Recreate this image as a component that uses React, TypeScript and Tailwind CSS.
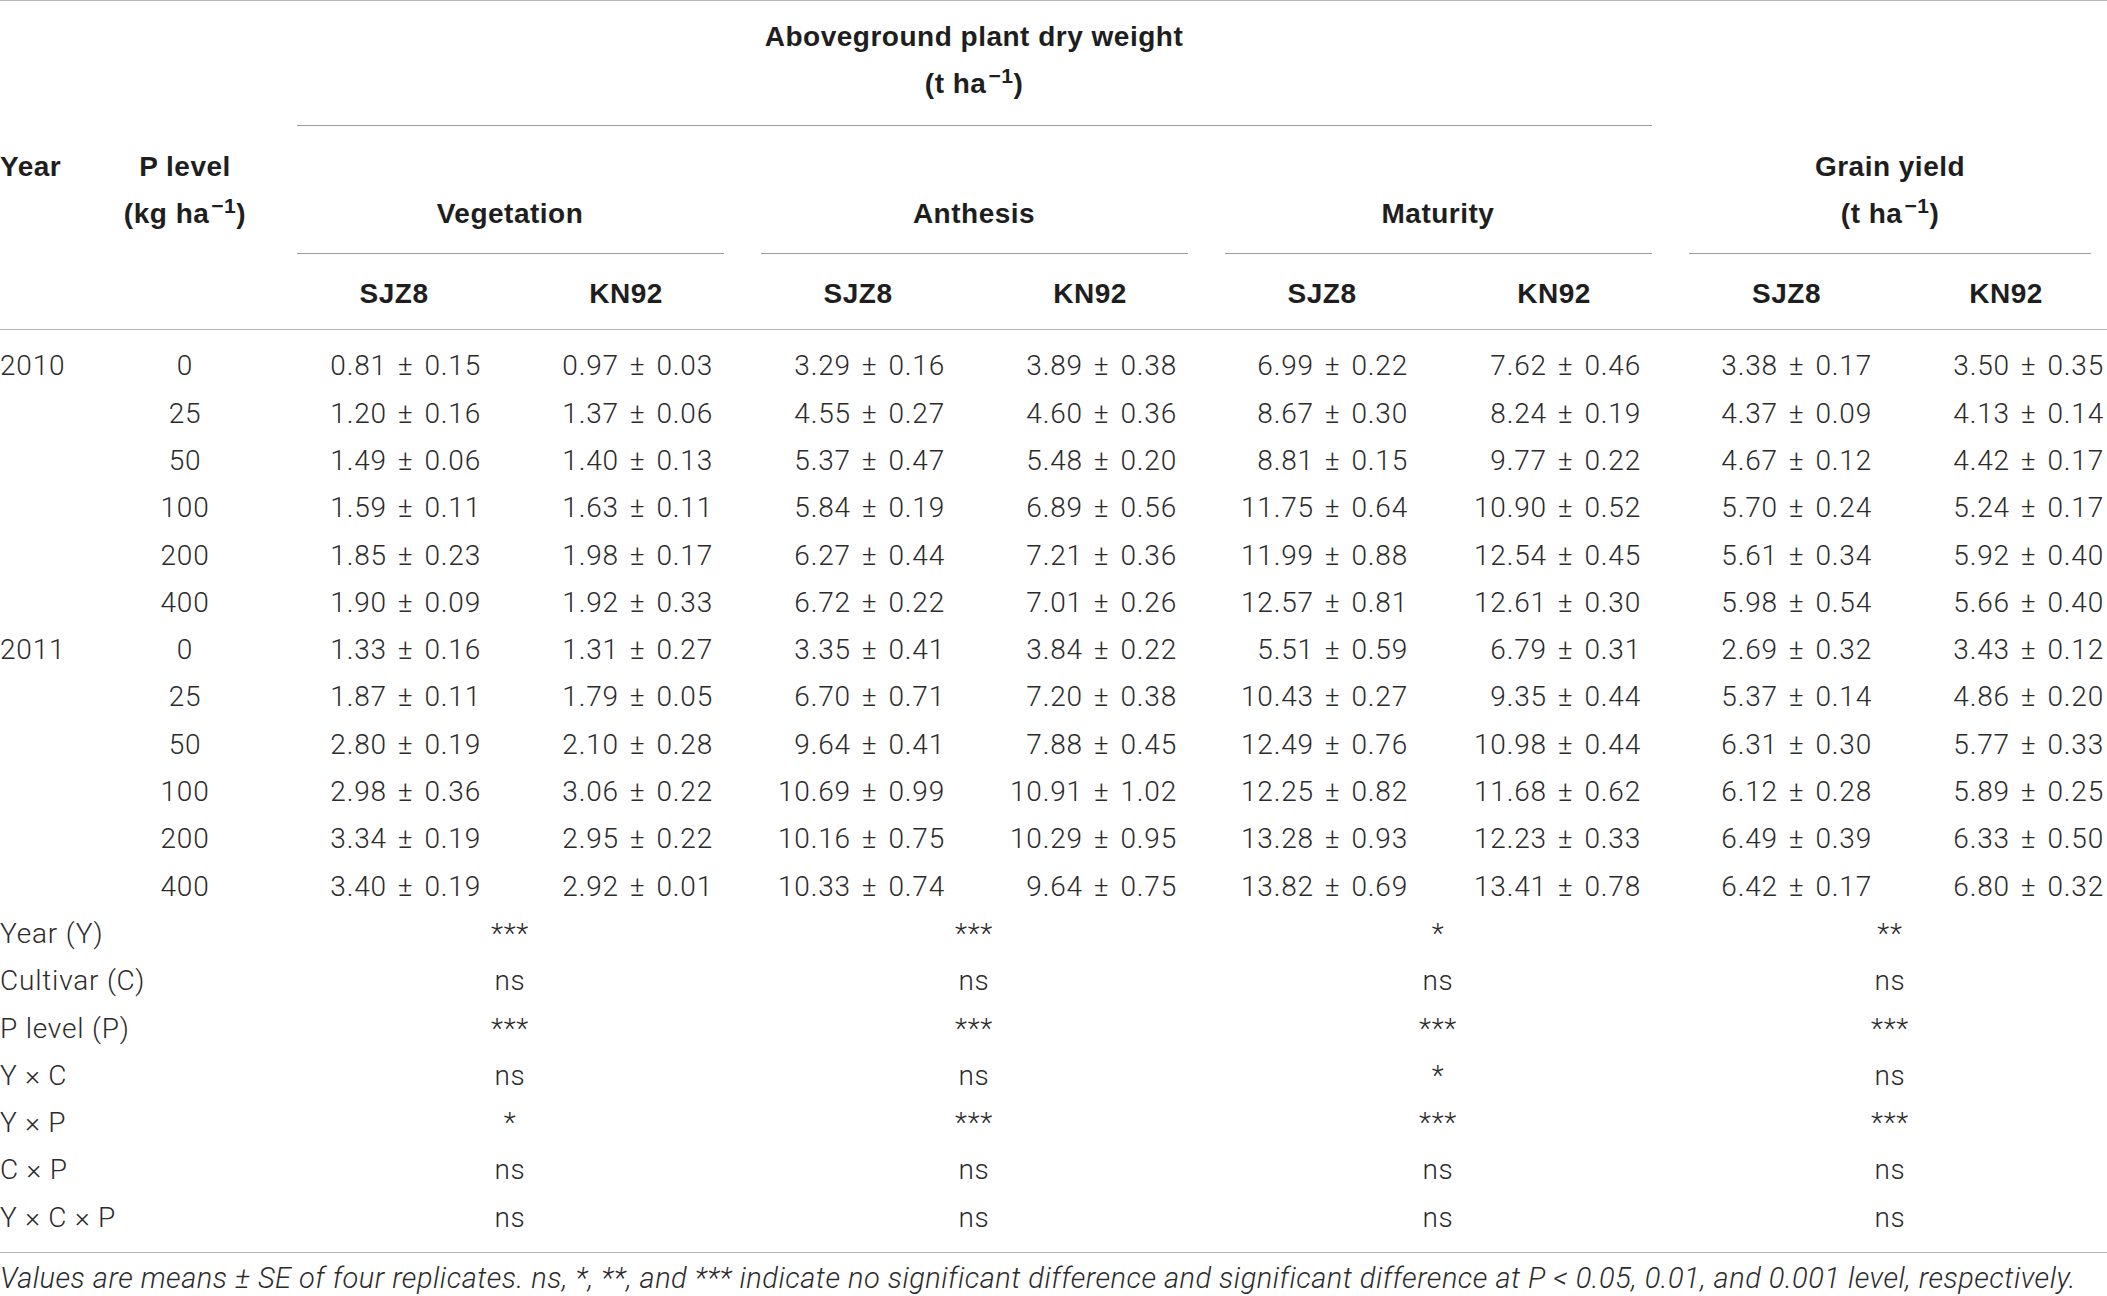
import React from "react";

const cols = "grid grid-cols-[92px_186px_232px_232px_232px_232px_232px_232px_220px_220px]";

const rows: { year: string; p: string; v: string[] }[] = [
  { year: "2010", p: "0", v: ["0.81 ± 0.15", "0.97 ± 0.03", "3.29 ± 0.16", "3.89 ± 0.38", "6.99 ± 0.22", "7.62 ± 0.46", "3.38 ± 0.17", "3.50 ± 0.35"] },
  { year: "", p: "25", v: ["1.20 ± 0.16", "1.37 ± 0.06", "4.55 ± 0.27", "4.60 ± 0.36", "8.67 ± 0.30", "8.24 ± 0.19", "4.37 ± 0.09", "4.13 ± 0.14"] },
  { year: "", p: "50", v: ["1.49 ± 0.06", "1.40 ± 0.13", "5.37 ± 0.47", "5.48 ± 0.20", "8.81 ± 0.15", "9.77 ± 0.22", "4.67 ± 0.12", "4.42 ± 0.17"] },
  { year: "", p: "100", v: ["1.59 ± 0.11", "1.63 ± 0.11", "5.84 ± 0.19", "6.89 ± 0.56", "11.75 ± 0.64", "10.90 ± 0.52", "5.70 ± 0.24", "5.24 ± 0.17"] },
  { year: "", p: "200", v: ["1.85 ± 0.23", "1.98 ± 0.17", "6.27 ± 0.44", "7.21 ± 0.36", "11.99 ± 0.88", "12.54 ± 0.45", "5.61 ± 0.34", "5.92 ± 0.40"] },
  { year: "", p: "400", v: ["1.90 ± 0.09", "1.92 ± 0.33", "6.72 ± 0.22", "7.01 ± 0.26", "12.57 ± 0.81", "12.61 ± 0.30", "5.98 ± 0.54", "5.66 ± 0.40"] },
  { year: "2011", p: "0", v: ["1.33 ± 0.16", "1.31 ± 0.27", "3.35 ± 0.41", "3.84 ± 0.22", "5.51 ± 0.59", "6.79 ± 0.31", "2.69 ± 0.32", "3.43 ± 0.12"] },
  { year: "", p: "25", v: ["1.87 ± 0.11", "1.79 ± 0.05", "6.70 ± 0.71", "7.20 ± 0.38", "10.43 ± 0.27", "9.35 ± 0.44", "5.37 ± 0.14", "4.86 ± 0.20"] },
  { year: "", p: "50", v: ["2.80 ± 0.19", "2.10 ± 0.28", "9.64 ± 0.41", "7.88 ± 0.45", "12.49 ± 0.76", "10.98 ± 0.44", "6.31 ± 0.30", "5.77 ± 0.33"] },
  { year: "", p: "100", v: ["2.98 ± 0.36", "3.06 ± 0.22", "10.69 ± 0.99", "10.91 ± 1.02", "12.25 ± 0.82", "11.68 ± 0.62", "6.12 ± 0.28", "5.89 ± 0.25"] },
  { year: "", p: "200", v: ["3.34 ± 0.19", "2.95 ± 0.22", "10.16 ± 0.75", "10.29 ± 0.95", "13.28 ± 0.93", "12.23 ± 0.33", "6.49 ± 0.39", "6.33 ± 0.50"] },
  { year: "", p: "400", v: ["3.40 ± 0.19", "2.92 ± 0.01", "10.33 ± 0.74", "9.64 ± 0.75", "13.82 ± 0.69", "13.41 ± 0.78", "6.42 ± 0.17", "6.80 ± 0.32"] },
];

const stats: { label: string; v: string[] }[] = [
  { label: "Year (Y)", v: ["***", "***", "*", "**"] },
  { label: "Cultivar (C)", v: ["ns", "ns", "ns", "ns"] },
  { label: "P level (P)", v: ["***", "***", "***", "***"] },
  { label: "Y × C", v: ["ns", "ns", "*", "ns"] },
  { label: "Y × P", v: ["*", "***", "***", "***"] },
  { label: "C × P", v: ["ns", "ns", "ns", "ns"] },
  { label: "Y × C × P", v: ["ns", "ns", "ns", "ns"] },
];

// right padding of each value column, so the numbers line up like the print
const valuePad = ["pr-[29px]", "pr-[29px]", "pr-[29px]", "pr-[29px]", "pr-[30px]", "pr-[29px]", "pr-[18px]", "pr-[6px]"];

function Unit({ pre }: { pre: string }) {
  return (
    <span>
      ({pre} ha<sup className="ml-[2px]">−1</sup>)
    </span>
  );
}

function Value({ text }: { text: string }) {
  const [mean, se] = text.split(" ± ");
  return (
    <>
      {mean}
      <span className="mx-[11px]">±</span>
      {se}
    </>
  );
}

export default function App() {
  return (
    <div className="w-[2107px] h-[1296px] overflow-hidden bg-white text-[28px] tracking-[0.8px] text-[#2b2b2b] font-['Roboto','Liberation_Sans',sans-serif] font-light">
      <div className="w-[2110px]">
        {/* Header */}
        <div className="border-t border-[#b5b5b5] font-['Liberation_Sans',Arial,sans-serif] font-bold tracking-[0.5px] text-[#1e1e1e] leading-[47px]">
          {/* Row A: aboveground heading */}
          <div className={cols}>
            <div className="col-span-2" />
            <div className="col-span-6 flex flex-col">
              <div className="pt-[12px] pb-[18px] text-center">
                <div>Aboveground plant dry weight</div>
                <div>
                  <Unit pre="t" />
                </div>
              </div>
              <div className="ml-[19px] mr-[18px] border-b border-[#9d9d9d]" />
            </div>
            <div className="col-span-2" />
          </div>

          {/* Row B: year, P level, stages, grain yield */}
          <div className={cols}>
            <div className="pt-[17px]">Year</div>
            <div className="pt-[17px] text-center">
              <div>P level</div>
              <div>
                <Unit pre="kg" />
              </div>
            </div>
            {["Vegetation", "Anthesis", "Maturity"].map((s) => (
              <div key={s} className="col-span-2 flex flex-col">
                <div className="pt-[64px] pb-[16px] text-center">{s}</div>
                <div className="ml-[19px] mr-[18px] border-b border-[#9d9d9d]" />
              </div>
            ))}
            <div className="col-span-2 flex flex-col">
              <div className="pt-[17px] pb-[16px] text-center">
                <div>Grain yield</div>
                <div>
                  <Unit pre="t" />
                </div>
              </div>
              <div className="ml-[19px] mr-[19px] border-b border-[#9d9d9d]" />
            </div>
          </div>

          {/* Row C: cultivars */}
          <div className={`${cols} border-b border-[#b5b5b5] pt-[16px] pb-[12px]`}>
            <div className="col-span-2" />
            <div className="text-center">SJZ8</div>
            <div className="text-center">KN92</div>
            <div className="text-center">SJZ8</div>
            <div className="text-center">KN92</div>
            <div className="text-center">SJZ8</div>
            <div className="text-center">KN92</div>
            <div className="text-center pl-[13px]">SJZ8</div>
            <div className="text-center pl-[12px]">KN92</div>
          </div>
        </div>

        {/* Body */}
        <div className="pt-[12.4px] pb-[11px] border-b border-[#b5b5b5]">
          {rows.map((r, i) => (
            <div key={i} className={`${cols} h-[47.3px] leading-[47.3px]`}>
              <div className="whitespace-nowrap">{r.year}</div>
              <div className="text-center">{r.p}</div>
              {r.v.map((val, j) => (
                <div key={j} className={`text-right whitespace-nowrap ${valuePad[j]}`}>
                  <Value text={val} />
                </div>
              ))}
            </div>
          ))}
          {stats.map((s) => (
            <div key={s.label} className={`${cols} h-[47.3px] leading-[47.3px]`}>
              <div className="col-span-2 whitespace-nowrap">{s.label}</div>
              {s.v.map((val, j) => (
                <div key={j} className="col-span-2 text-center">
                  {val}
                </div>
              ))}
            </div>
          ))}
        </div>

        {/* Footnote */}
        <div className="pt-[2px] leading-[47px] text-[29px] tracking-[0.5px] italic whitespace-nowrap">
          Values are means ± SE of four replicates. ns, *, **, and *** indicate no significant difference and
          significant difference at P &lt; 0.05, 0.01, and 0.001 level, respectively.
        </div>
      </div>
    </div>
  );
}
